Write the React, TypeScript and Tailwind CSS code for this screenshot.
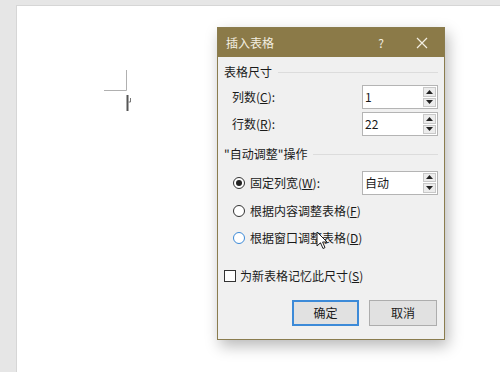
import React from "react";

const font = { fontFamily: '"Noto Sans CJK SC", "Noto Sans", sans-serif' };

function Spin({ value }: { value: string }) {
  return (
    <div className="flex h-[24px] w-[76px] border border-[#b4b4b4] bg-white">
      <div className="flex-1 pl-[2px] text-[12px] leading-[22px] text-[#1a1a1a]">{value}</div>
      <div className="flex w-[15px] flex-col gap-[1px] bg-white p-[1px]">
        <div className="flex flex-1 items-center justify-center border border-[#c8c8c8] bg-[#ececec]">
          <svg width="7" height="4" viewBox="0 0 7 4"><path d="M0 4 L3.5 0 L7 4 Z" fill="#222" /></svg>
        </div>
        <div className="flex flex-1 items-center justify-center border border-[#c8c8c8] bg-[#ececec]">
          <svg width="7" height="4" viewBox="0 0 7 4"><path d="M0 0 L3.5 4 L7 0 Z" fill="#222" /></svg>
        </div>
      </div>
    </div>
  );
}

function Radio({ checked, blue }: { checked?: boolean; blue?: boolean }) {
  return (
    <span
      className={`flex h-[12px] w-[12px] items-center justify-center rounded-full border bg-white ${
        blue ? "border-[#3c8ad8]" : "border-[#333]"
      }`}
    >
      {checked && <span className="h-[6px] w-[6px] rounded-full bg-[#222]" />}
    </span>
  );
}

export default function App() {
  return (
    <div className="relative flex h-[372px] w-[500px] overflow-hidden bg-[#e6e6e6]" style={font}>
      <div className="mt-[5px] ml-[16px] flex-1 border-l border-t border-[#d6d6d6] bg-white" />

      {/* paragraph corner mark */}
      <svg className="absolute left-[100px] top-[66px]" width="40" height="50" viewBox="0 0 40 50">
        <path d="M4 24.5 H26.5 V4" stroke="#b0b0b0" strokeWidth="1" fill="none" />
        <path d="M27.5 29 V45" stroke="#555" strokeWidth="2" />
        <path d="M30.5 32 V36 H28.5" stroke="#777" strokeWidth="1" fill="none" />
      </svg>

      {/* dialog */}
      <div className="absolute left-[217px] top-[27px] flex h-[313px] w-[228px] flex-col border border-[#8a7c4e] bg-[#f0f0f0] shadow-[3px_6px_14px_rgba(0,0,0,0.28)]">
        <div className="flex h-[29px] items-center bg-[#8b7a48] pl-[8px] text-[12px] text-[#f3efe2]">
          <span className="flex-1">插入表格</span>
          <span className="mr-[13px] w-[12px] text-center">?</span>
          <span className="flex w-[44px] items-center justify-center">
            <svg width="12" height="12" viewBox="0 0 12 12">
              <path d="M1 1 L11 11 M11 1 L1 11" stroke="#f3efe2" strokeWidth="1.2" />
            </svg>
          </span>
        </div>

        <div className="flex flex-col pl-[6px] pr-[6px] text-[12px] text-[#1a1a1a]">
          <div className="mt-[6px] flex h-[18px] items-center gap-[6px]">
            <span>表格尺寸</span>
            <span className="h-px flex-1 bg-[#dcdcdc]" />
          </div>

          <div className="mt-[4px] flex h-[24px] items-center pl-[8px]">
            <span className="flex-1">
              列数(<span className="underline">C</span>):
            </span>
            <Spin value="1" />
          </div>
          <div className="mt-[3px] flex h-[24px] items-center pl-[8px]">
            <span className="flex-1">
              行数(<span className="underline">R</span>):
            </span>
            <Spin value="22" />
          </div>

          <div className="mt-[10px] flex h-[16px] items-center gap-[6px]">
            <span>"自动调整"操作</span>
            <span className="h-px flex-1 bg-[#dcdcdc]" />
          </div>

          <div className="mt-[9px] flex h-[23px] items-center pl-[9px]">
            <Radio checked />
            <span className="ml-[5px] flex-1">
              固定列宽(<span className="underline">W</span>):
            </span>
            <Spin value="自动" />
          </div>
          <div className="mt-[6px] flex h-[22px] items-center pl-[9px]">
            <Radio />
            <span className="ml-[5px]">
              根据内容调整表格(<span className="underline">F</span>)
            </span>
          </div>
          <div className="mt-[5px] flex h-[22px] items-center pl-[9px]">
            <Radio blue />
            <span className="ml-[5px]">
              根据窗口调整表格(<span className="underline">D</span>)
            </span>
          </div>

          <div className="mt-[20px] flex h-[14px] items-center">
            <span className="h-[12px] w-[12px] border border-[#333] bg-white" />
            <span className="ml-[4px]">
              为新表格记忆此尺寸(<span className="underline">S</span>)
            </span>
          </div>

          <div className="mt-[17px] flex justify-end gap-[10px] pr-px">
            <button className="flex h-[26px] w-[67px] items-center justify-center border-2 border-[#3c8ad8] bg-[#e1e1e1] text-[12px]">
              确定
            </button>
            <button className="flex h-[26px] w-[68px] items-center justify-center border border-[#adadad] bg-[#e1e1e1] text-[12px]">
              取消
            </button>
          </div>
        </div>
      </div>

      {/* mouse cursor */}
      <svg className="absolute left-[316px] top-[231px]" width="14" height="20" viewBox="0 0 14 20">
        <path
          d="M1 1 L1 15 L4.5 11.8 L7 17.5 L9 16.6 L6.6 11 L11 11 Z"
          fill="#fff"
          stroke="#222"
          strokeWidth="1"
          strokeLinejoin="round"
        />
      </svg>
    </div>
  );
}
